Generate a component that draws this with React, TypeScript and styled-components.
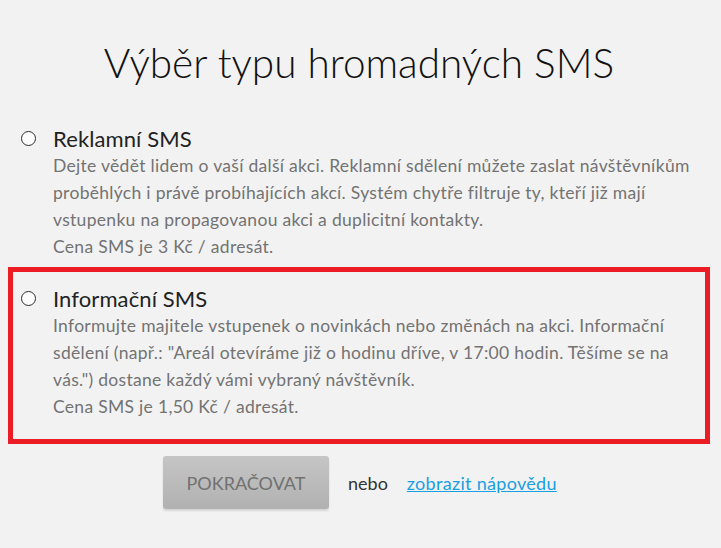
import React from 'react';
import styled, { createGlobalStyle } from 'styled-components';

const GlobalStyle = createGlobalStyle`
  html, body {
    margin: 0;
    padding: 0;
    background: #f2f2f2;
  }
  body {
    font-family: Lato, "Open Sans", sans-serif;
    color: #333;
  }
`;

const Page = styled.div`
  width: 721px;
  min-height: 548px;
  padding: 40px 11px 0 8px;
  box-sizing: border-box;
`;

const Title = styled.h1`
  margin: 0 0 34px;
  font-size: 40.5px;
  font-weight: 300;
  line-height: 46px;
  text-align: center;
  color: #111;
`;

const OptionList = styled.div`
  display: flex;
  flex-direction: column;
  gap: 2px;
`;

const Option = styled.label<{ $active?: boolean }>`
  display: flex;
  gap: 17px;
  border: 5px solid ${({ $active }) => ($active ? '#ec1c24' : 'transparent')};
  padding: ${({ $active }) => ($active ? '13px 8px 19px' : '0 8px')};
  cursor: pointer;
`;

const Radio = styled.span`
  flex: none;
  width: 15px;
  height: 15px;
  margin-top: 6px;
  border: 1.5px solid #2a2a2a;
  border-radius: 50%;
  background: #fff;
  box-sizing: border-box;
`;

const OptionBody = styled.div`
  display: flex;
  flex-direction: column;
`;

const OptionTitle = styled.div`
  font-size: 22px;
  line-height: 27px;
  letter-spacing: 0.1px;
  color: #222;
`;

const OptionText = styled.p`
  margin: 0;
  font-size: 17.5px;
  line-height: 27px;
  letter-spacing: 0.3px;
  color: #737373;
`;

const Actions = styled.div`
  display: flex;
  align-items: center;
  margin: 12px 0 0 155px;
`;

const Button = styled.button`
  width: 166px;
  height: 53px;
  border: none;
  border-radius: 3px;
  background: linear-gradient(#c5c5c5, #b1b1b1);
  box-shadow: 0 2px 2px rgba(0, 0, 0, 0.12);
  color: #717171;
  font-family: inherit;
  font-size: 18px;
  cursor: pointer;
`;

const Or = styled.span`
  margin: 0 19px;
  font-size: 18px;
  color: #333;
`;

const HelpLink = styled.a`
  font-size: 18px;
  letter-spacing: 0.3px;
  color: #1a9fe0;
  text-decoration: underline;
`;

const options = [
  {
    title: 'Reklamní SMS',
    lines: [
      'Dejte vědět lidem o vaší další akci. Reklamní sdělení můžete zaslat návštěvníkům',
      'proběhlých i právě probíhajících akcí. Systém chytře filtruje ty, kteří již mají',
      'vstupenku na propagovanou akci a duplicitní kontakty.',
    ],
    price: 'Cena SMS je 3 Kč / adresát.',
  },
  {
    title: 'Informační SMS',
    lines: [
      'Informujte majitele vstupenek o novinkách nebo změnách na akci. Informační',
      'sdělení (např.: "Areál otevíráme již o hodinu dříve, v 17:00 hodin. Těšíme se na',
      'vás.") dostane každý vámi vybraný návštěvník.',
    ],
    price: 'Cena SMS je 1,50 Kč / adresát.',
    active: true,
  },
];

const App: React.FC = () => (
  <>
    <GlobalStyle />
    <Page>
      <Title>Výběr typu hromadných SMS</Title>
      <OptionList>
        {options.map((opt) => (
          <Option key={opt.title} $active={opt.active}>
            <Radio />
            <OptionBody>
              <OptionTitle>{opt.title}</OptionTitle>
              <OptionText>
                {opt.lines.map((line) => (
                  <React.Fragment key={line}>
                    {line}
                    <br />
                  </React.Fragment>
                ))}
                {opt.price}
              </OptionText>
            </OptionBody>
          </Option>
        ))}
      </OptionList>
      <Actions>
        <Button>POKRAČOVAT</Button>
        <Or>nebo</Or>
        <HelpLink href="#">zobrazit nápovědu</HelpLink>
      </Actions>
    </Page>
  </>
);

export default App;
